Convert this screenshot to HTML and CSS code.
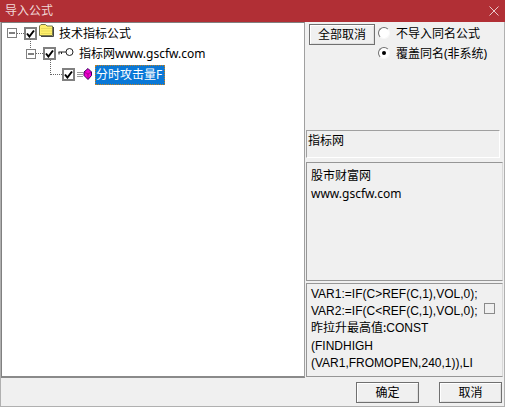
FILE: index.html
```html
<!DOCTYPE html>
<html lang="zh">
<head>
<meta charset="utf-8">
<title>导入公式</title>
<link rel="stylesheet" href="styles.css">
</head>
<body>
<div class="window">
  <header class="titlebar">
    <span class="title">导入公式</span>
    <svg class="close" width="10" height="10" viewBox="0 0 10 10"><path d="M0.5 0.5L9.5 9.5M9.5 0.5L0.5 9.5" stroke="#e9c9ca" fill="none"/></svg>
  </header>
  <main class="main">
    <section class="tree">
      <div class="row row-1">
        <svg class="exp" width="10" height="10" viewBox="0 0 10 10"><rect x=".5" y=".5" width="9" height="9" fill="#fff" stroke="#808080"/><path d="M2 5h6" stroke="#000"/></svg>
        <i class="dots-h d1"></i>
        <span class="check"><svg width="9" height="9" viewBox="0 0 9 9"><path d="M1 4.5L3.4 7.5L8 1.5" stroke="#000" stroke-width="2" fill="none"/></svg></span>
        <svg class="ico-folder" width="16" height="13" viewBox="0 0 16 13"><path d="M1.5 11.5V2L3 .5H7.5L9 2H14.5V11.5Z" fill="#ffef6a" stroke="#77774a"/><path d="M3 4.5h11M3 7h11M3 9.5h11" stroke="#d8cc50" stroke-width=".6"/><path d="M15.5 3V12.5H3" stroke="#444" fill="none"/></svg>
        <span class="label l1">技术指标公式</span>
      </div>
      <div class="row row-2">
        <i class="dots-v v1"></i>
        <svg class="exp" width="10" height="10" viewBox="0 0 10 10"><rect x=".5" y=".5" width="9" height="9" fill="#fff" stroke="#808080"/><path d="M2 5h6" stroke="#000"/></svg>
        <i class="dots-h d1"></i>
        <span class="check"><svg width="9" height="9" viewBox="0 0 9 9"><path d="M1 4.5L3.4 7.5L8 1.5" stroke="#000" stroke-width="2" fill="none"/></svg></span>
        <svg class="ico-key" width="16" height="9" viewBox="0 0 16 9"><circle cx="11.5" cy="4" r="3.5" fill="#fff" stroke="#222"/><path d="M8 4H.5M1 4V6.5M3.5 4V6" stroke="#222" fill="none"/></svg>
        <span class="label l2">指标网www.gscfw.com</span>
      </div>
      <div class="row row-3">
        <i class="dots-v v2"></i>
        <span class="check"><svg width="9" height="9" viewBox="0 0 9 9"><path d="M1 4.5L3.4 7.5L8 1.5" stroke="#000" stroke-width="2" fill="none"/></svg></span>
        <svg class="ico-gem" width="15" height="12" viewBox="0 0 15 12"><path d="M0 4.5h6M0 6.5h6M0 8.5h6" stroke="#9a9a9a"/><path d="M11 .5L14.5 4V7.5L11 11.5L7 7.5V4Z" fill="#f000d0" stroke="#3a0060"/><path d="M7 4L11 6L14.5 4M11 6V11" stroke="#80006a" stroke-width=".6" fill="none"/></svg>
        <span class="label sel">分时攻击量F</span>
      </div>
    </section>
    <aside class="side">
      <div class="options">
        <button class="btn btn-all">全部取消</button>
        <div class="radios">
          <label class="radio"><span class="dot"></span>不导入同名公式</label>
          <label class="radio"><span class="dot on"></span>覆盖同名(非系统)</label>
        </div>
      </div>
      <div class="namebox">指标网</div>
      <div class="desc">股市财富网<br>www.gscfw.com</div>
      <div class="code">
        <p class="code-text">VAR1:=IF(C&gt;REF(C,1),VOL,0);<br>VAR2:=IF(C&lt;REF(C,1),VOL,0);<br><span class="cjk">昨拉升最高值:</span>CONST<br>(FINDHIGH<br>(VAR1,FROMOPEN,240,1)),LI</p>
        <span class="code-check"></span>
      </div>
    </aside>
  </main>
  <footer class="footer">
    <button class="btn btn-foot">确定</button>
    <button class="btn btn-foot">取消</button>
  </footer>
</div>
</body>
</html>
```

FILE: styles.css
```css
* { box-sizing: border-box; }
html, body { margin: 0; padding: 0; }
body {
  width: 505px;
  height: 407px;
  overflow: hidden;
  font: 12px/17px "Noto Sans", "Noto Sans CJK SC", sans-serif;
  color: #000;
  background: #f0f0f0;
}
.window {
  width: 505px;
  height: 407px;
  display: flex;
  flex-direction: column;
  border-left: 1px solid #b0b0b0;
  border-right: 1px solid #b0b0b0;
  border-bottom: 1px solid #b0b0b0;
}
.titlebar {
  height: 22px;
  margin: 0 -1px;
  background: #b12f35;
  color: #f0d8d8;
  display: flex;
  align-items: center;
  justify-content: space-between;
  padding: 0 5px 1px 5px;
  flex: none;
}
.close { margin-right: 1px; }
.main { flex: none; height: 356px; display: flex; }
.tree {
  width: 304px;
  height: 356px;
  background: #fff;
  border: 1px solid #a0a0a0;
  border-left-color: #808080;
  border-top-color: #808080;
  border-bottom: 2px solid #8a8a8a;
  flex: none;
}
.row {
  position: relative;
  display: flex;
  align-items: center;
  height: 21px;
}
.row-1 { padding-left: 5px; height: 20px; }
.row-2 { padding-left: 24px; }
.row-3 { padding-left: 60px; }
.exp { flex: none; }
.dots-h { display: block; height: 0; border-top: 1px dotted #666; flex: none; }
.d1 { width: 7px; }
.dots-v { position: absolute; width: 0; border-left: 1px dotted #666; }
.v1 { left: 28px; top: -4px; height: 9px; }
.v2 { left: 48px; top: -4px; height: 15px; }
.v2::after {
  content: "";
  position: absolute;
  left: 0;
  bottom: 0;
  width: 11px;
  border-top: 1px dotted #666;
}
.check {
  flex: none;
  width: 13px;
  height: 13px;
  border: 2px solid #808080;
  background: #fff;
  display: flex;
  align-items: center;
  justify-content: center;
}
.ico-folder { flex: none; margin: -5px 0 0 1px; }
.ico-key { flex: none; margin: -2px 0 0 2px; }
.ico-gem { flex: none; margin: -2px 0 0 2px; }
.label { white-space: nowrap; }
.l1 { margin-left: 5px; }
.l2 { margin-left: 5px; }
.sel {
  margin-left: 3px;
  width: 70px;
  height: 20px;
  padding-left: 1px;
  line-height: 19px;
  color: #fff;
  background: #0a78d7;
  outline: 1px dotted #c08020;
  outline-offset: -1px;
}
.side {
  flex: 1;
  min-width: 0;
  display: flex;
  flex-direction: column;
  padding: 2px 1px 0 1px;
}
.options {
  height: 106px;
  display: flex;
  align-items: flex-start;
  padding-left: 3px;
  gap: 3px;
}
.btn {
  font: inherit;
  color: #000;
  background: #f0f0f0;
  border: 1px solid #707070;
  box-shadow: inset 1px 1px 0 #fff, inset -1px -1px 0 #e0e0e0;
  padding: 0;
}
.btn-all { width: 66px; height: 21px; }
.radios { display: flex; flex-direction: column; gap: 2px; }
.radio { display: flex; align-items: center; height: 18px; white-space: nowrap; gap: 6px; }
.dot {
  width: 12px;
  height: 12px;
  border-radius: 50%;
  background: #fff;
  border: 1px solid;
  border-color: #707070 #f8f8f8 #f8f8f8 #707070;
  position: relative;
  flex: none;
}
.dot.on::after {
  content: "";
  position: absolute;
  left: 3px;
  top: 3px;
  width: 4px;
  height: 4px;
  border-radius: 50%;
  background: #000;
}
.namebox {
  width: 194px;
  height: 28px;
  border: 1px solid;
  border-color: #a0a0a0 #fff #fff #a0a0a0;
  padding: 1px 0 0 1px;
  margin-bottom: 4px;
}
.desc {
  width: 197px;
  height: 119px;
  border: 1px solid;
  border-color: #969696 #d8d8d8 #969696 #969696;
  padding: 4px 0 0 4px;
  line-height: 18px;
  margin-bottom: 2px;
}
.code {
  width: 197px;
  height: 94px;
  border: 1px solid #969696;
  border-color: #969696 #d8d8d8 #969696 #969696;
  padding: 2px 0 0 4px;
  display: flex;
}
.code-text {
  margin: 0;
  white-space: nowrap;
  flex: 1;
  font: 12px/17.2px "Liberation Sans", sans-serif;
}
.cjk { font: 12px/1 "Noto Sans CJK SC", sans-serif; }
.code-check {
  flex: none;
  width: 11px;
  height: 11px;
  margin: 17px 7px 0 0;
  border: 1px solid #8a8a8a;
  background: #f0f0f0;
}
.footer {
  flex: 1;
  display: flex;
  justify-content: flex-end;
  align-items: flex-start;
  padding: 4px 2px 0 0;
  gap: 20px;
}
.btn-foot { width: 63px; height: 21px; }
```
